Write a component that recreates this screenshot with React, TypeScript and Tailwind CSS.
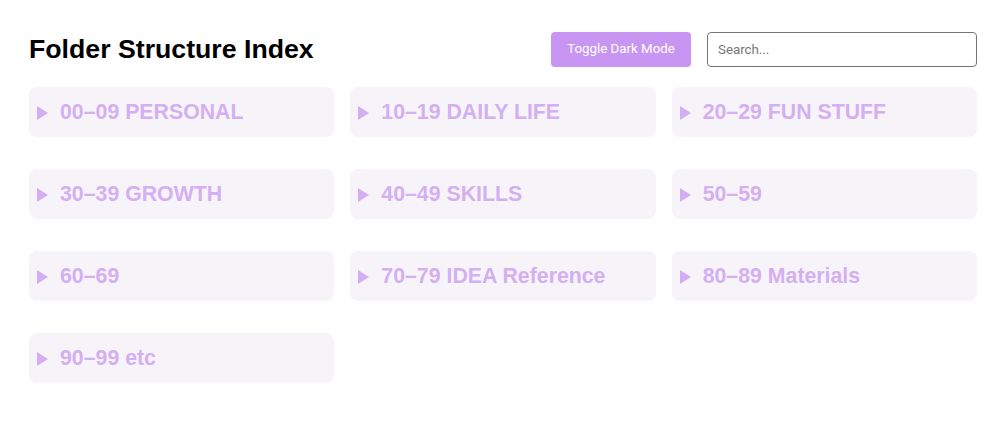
const folders = [
  '00–09 PERSONAL',
  '10–19 DAILY LIFE',
  '20–29 FUN STUFF',
  '30–39 GROWTH',
  '40–49 SKILLS',
  '50–59',
  '60–69',
  '70–79 IDEA Reference',
  '80–89 Materials',
  '90–99 etc',
]

function FolderCard({ name }: { name: string }) {
  return (
    <div className="flex h-[50px] items-center rounded-lg bg-[#f7f4f9] pl-2 pt-[2px]">
      <svg className="h-[14px] w-[11px] shrink-0" viewBox="0 0 11 14">
        <path d="M0 0 L11 7 L0 14 Z" fill="#d3aef3" />
      </svg>
      <span className="ml-[12px] text-[21.3px] font-bold text-[#d4aff1]">{name}</span>
    </div>
  )
}

export default function App() {
  return (
    <div className="min-h-screen bg-white pl-[29px] pr-[27px] pt-[29px] font-['Liberation_Sans',Arial,sans-serif]">
      <header className="flex items-center justify-between">
        <h1 className="text-[26.7px] font-bold text-black">Folder Structure Index</h1>
        <div className="flex items-center gap-4">
          <button className="h-[35px] w-[140px] rounded bg-[#c896f2] text-[13.3px] text-white font-['Roboto',sans-serif]">
            Toggle Dark Mode
          </button>
          <input
            className="h-[35px] w-[270px] rounded-sm border border-[#767676] px-[10px] text-[13.3px] font-['Roboto',sans-serif] placeholder:text-[#757575]"
            placeholder="Search..."
          />
        </div>
      </header>
      <main className="mt-[18px] grid grid-cols-3 gap-x-4 gap-y-8">
        {folders.map((f) => (
          <FolderCard key={f} name={f} />
        ))}
      </main>
    </div>
  )
}
